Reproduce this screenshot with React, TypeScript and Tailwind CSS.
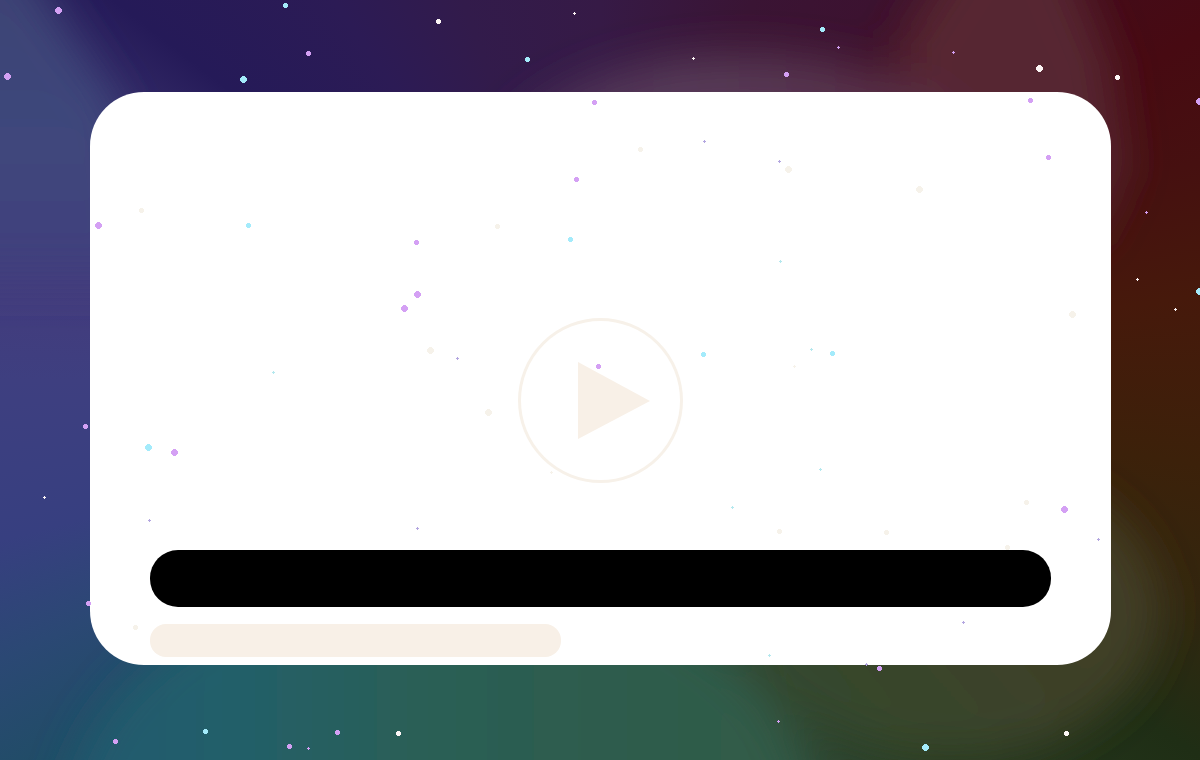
const PURPLE = "#d4a0f4";
const CYAN = "#a4ebfb";
const WHITE = "#fdf6f6";
const CREAM = "#f6f2ea";
const LILAC = "#b3a6e0";
const AQUA = "#b4e8ee";

// [x, y, size, color]
type Star = [number, number, number, string];

const STARS: Star[] = [
  [58, 10, 7, PURPLE],
  [7, 76, 7, PURPLE],
  [285, 5, 5, CYAN],
  [308, 53, 5, PURPLE],
  [243, 79, 7, CYAN],
  [438, 21, 5, WHITE],
  [574, 13, 3, WHITE],
  [527, 59, 5, CYAN],
  [693, 58, 3, WHITE],
  [786, 74, 5, PURPLE],
  [822, 29, 5, CYAN],
  [838, 47, 3, PURPLE],
  [953, 52, 3, PURPLE],
  [1039, 68, 7, WHITE],
  [1117, 77, 5, WHITE],
  [1199, 101, 7, PURPLE],
  [1146, 212, 3, PURPLE],
  [1137, 279, 3, WHITE],
  [1199, 291, 7, CYAN],
  [1175, 309, 3, WHITE],
  [85, 426, 5, PURPLE],
  [44, 497, 3, WHITE],
  [88, 603, 5, PURPLE],
  [115, 741, 5, PURPLE],
  [205, 731, 5, CYAN],
  [289, 746, 5, PURPLE],
  [308, 748, 3, PURPLE],
  [337, 732, 5, PURPLE],
  [398, 733, 5, WHITE],
  [778, 721, 3, PURPLE],
  [879, 668, 5, PURPLE],
  [925, 747, 7, CYAN],
  [1066, 733, 5, WHITE],
  [594, 102, 5, PURPLE],
  [1030, 100, 5, PURPLE],
  [1048, 157, 5, PURPLE],
  [640, 149, 5, CREAM],
  [704, 141, 3, LILAC],
  [779, 161, 3, LILAC],
  [788, 169, 7, CREAM],
  [919, 189, 7, CREAM],
  [576, 179, 5, PURPLE],
  [141, 210, 5, CREAM],
  [98, 225, 7, PURPLE],
  [248, 225, 5, CYAN],
  [497, 226, 5, CREAM],
  [416, 242, 5, PURPLE],
  [570, 239, 5, CYAN],
  [780, 261, 3, AQUA],
  [417, 294, 7, PURPLE],
  [404, 308, 7, PURPLE],
  [1072, 314, 7, CREAM],
  [430, 350, 7, CREAM],
  [457, 358, 3, LILAC],
  [598, 366, 5, PURPLE],
  [703, 354, 5, CYAN],
  [811, 349, 3, AQUA],
  [832, 353, 5, CYAN],
  [794, 366, 3, CREAM],
  [273, 372, 3, AQUA],
  [488, 412, 7, CREAM],
  [148, 447, 7, CYAN],
  [174, 452, 7, PURPLE],
  [551, 472, 3, CREAM],
  [820, 469, 3, AQUA],
  [1026, 502, 5, CREAM],
  [1064, 509, 7, PURPLE],
  [732, 507, 3, AQUA],
  [149, 520, 3, LILAC],
  [417, 528, 3, LILAC],
  [779, 531, 5, CREAM],
  [886, 532, 5, CREAM],
  [1098, 539, 3, LILAC],
  [1007, 547, 5, CREAM],
  [135, 627, 5, CREAM],
  [963, 622, 3, LILAC],
  [769, 655, 3, AQUA],
  [866, 664, 3, LILAC],
];

// pixel outlines on a 1px grid, drawn from the centre pixel
const STAR_SHAPES: Record<number, string> = {
  3: "M0 -1h1v1h1v1h-1v1h-1v-1h-1v-1h1z",
  5: "M-1 -2h3v1h1v3h-1v1h-3v-1h-1v-3h1z",
  7: "M-1 -3h3v1h1v1h1v3h-1v1h-1v1h-3v-1h-1v-1h-1v-3h1v-1h1z",
};

function Nebula() {
  return (
    <svg
      aria-hidden="true"
      className="absolute inset-0 h-full w-full"
      viewBox="0 0 1200 760"
      preserveAspectRatio="none"
    >
      <defs>
        <filter id="soft" x="-30%" y="-30%" width="160%" height="160%">
          <feGaussianBlur stdDeviation="22" />
        </filter>
        <linearGradient id="left" x1="0" x2="0" y1="0" y2="1">
          <stop offset="0" stopColor="#3b4273" />
          <stop offset="0.6" stopColor="#3f477c" />
          <stop offset="1" stopColor="#413f7e" />
        </linearGradient>
        <linearGradient id="top" x1="0" x2="1" y1="0" y2="0">
          <stop offset="0" stopColor="#4c3058" />
          <stop offset="0.4" stopColor="#573c58" />
          <stop offset="1" stopColor="#582a40" />
        </linearGradient>
        <linearGradient id="bottom" x1="0" x2="1" y1="0" y2="0">
          <stop offset="0" stopColor="#20596f" />
          <stop offset="0.2" stopColor="#225e6b" />
          <stop offset="0.5" stopColor="#2b5e54" />
          <stop offset="1" stopColor="#315a45" />
        </linearGradient>
        <linearGradient id="corner" x1="0" x2="1" y1="0.6" y2="0">
          <stop offset="0" stopColor="#34482e" />
          <stop offset="1" stopColor="#473a22" />
        </linearGradient>
      </defs>
      <g filter="url(#soft)">
        <path d="M-60 -60H10L60 20L120 110L140 280H-60Z" fill="url(#left)" />
        <path d="M965 -60H1060L1110 60L1125 170L1090 240H900V40Z" fill="#572833" />
        <ellipse cx="745" cy="170" rx="245" ry="115" fill="url(#top)" />
        <ellipse cx="950" cy="610" rx="210" ry="150" fill="url(#corner)" />
        <ellipse cx="440" cy="830" rx="375" ry="260" fill="url(#bottom)" />
      </g>
    </svg>
  );
}

function Stars() {
  return (
    <svg
      aria-hidden="true"
      className="pointer-events-none absolute inset-0 h-full w-full"
      viewBox="0 0 1200 760"
      preserveAspectRatio="xMidYMid slice"
      shapeRendering="crispEdges"
    >
      {STARS.map(([x, y, size, color]) => (
        <path key={`${x}-${y}`} d={STAR_SHAPES[size]} transform={`translate(${x} ${y})`} fill={color} />
      ))}
    </svg>
  );
}

function PlayButton() {
  return (
    <button type="button" aria-label="Play" className="h-[165px] w-[165px] rounded-full border-3 border-[#f7f1e9]">
      <svg viewBox="0 0 159 159" className="h-full w-full" fill="#f8f0e7">
        <path d="M57 41 L129 80 L57 118 Z" />
      </svg>
    </button>
  );
}

export default function App() {
  return (
    <main className="relative min-h-screen overflow-hidden bg-[conic-gradient(#361a46_0deg,#3a1434_22deg,#3c1230_36deg,#440b19_52deg,#470a12_60deg,#461010_70deg,#46190b_82deg,#3c210a_98deg,#33260e_110deg,#1f2e15_122deg,#26391f_138deg,#2f4a38_155deg,#2b5a50_180deg,#245763_215deg,#204d66_235deg,#2b4874_245deg,#373f80_255deg,#3e3f80_270deg,#453a7b_283deg,#3b3470_295deg,#251a58_308deg,#2c1b55_325deg,#321b4b_340deg,#361a46_360deg)] pt-[92px] pr-[89px] pb-[95px] pl-[90px]">
      <Nebula />
      <section className="relative rounded-[54px] bg-white px-[60px] pt-[226px] pb-2">
        <div className="flex justify-center">
          <PlayButton />
        </div>
        <div className="mt-[67px] h-[57px] rounded-[28px] bg-black" />
        <div className="mt-[17px] h-[33px] w-[411px] max-w-full rounded-[16px] bg-[#f8f0e7]" />
      </section>
      <Stars />
    </main>
  );
}
